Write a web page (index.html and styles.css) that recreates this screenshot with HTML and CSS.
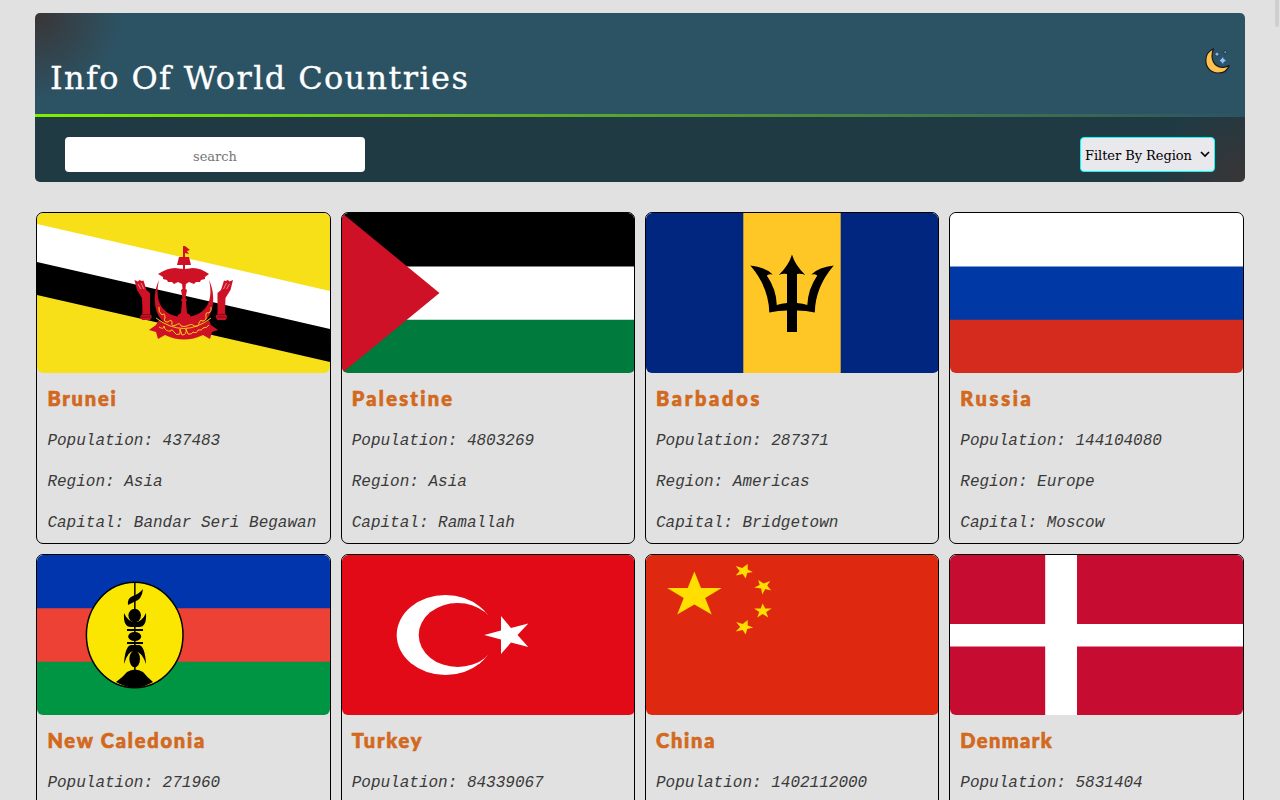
FILE: index.html
```html
<!DOCTYPE html>
<html lang="en">
<head>
<meta charset="utf-8">
<title>Info Of World Countries</title>
<link rel="stylesheet" href="styles.css">
</head>
<body>
<div class="page">
  <header class="header">
    <h1 class="title">Info Of World Countries</h1>
    <button class="theme" aria-label="Theme">
      <svg viewBox="0 0 26 26" width="26" height="26">
        <path d="M8.500 .8C3.500 3 .8 7.500 .8 12.500C.8 19.500 6 25 13 25C18.500 25 22.800 22 24.200 17.500C21.500 19.200 19.200 19.500 17 19.300C9.500 18.800 4.500 11.500 8.500 .8Z" fill="#ffc250" stroke="#16191c" stroke-width="1.200" stroke-linejoin="round"/>
        <path d="M17.700 8.800L19.200 11L21.200 12.500L19.200 14L17.700 16.200L16.200 14L14.200 12.500L16.200 11Z" fill="#8fc0ff" stroke="#36597c" stroke-width=".7"/>
        <path d="M12 3.600L13.200 5L14.500 6.100L13.200 7.200L12 8.600L10.800 7.200L9.500 6.100L10.800 5Z" fill="#7fb2f0" stroke="#1b3045" stroke-width=".8"/>
        <path d="M20.300 2.200L22.200 4.200L20.300 6.200L18.400 4.200Z" fill="#628cc0" stroke="#1b3045" stroke-width="1"/>
      </svg>
    </button>
  </header>
  <div class="toolbar">
    <input class="search" type="text" placeholder="search">
    <div class="region"><span class="region-label">Filter By Region</span>
      <svg viewBox="0 0 10 7" width="10" height="7"><path d="M1 1L5 5L9 1" fill="none" stroke="#000" stroke-width="1.700"/></svg>
    </div>
  </div>
  <main class="grid">
    <article class="card">
      <svg class="flag" viewBox="0 0 293 160" preserveAspectRatio="none">
        <path fill="#f7e017" d="M0 0H293V160H0z"/>
        <path fill="#fff" d="M0 11L293 78V117L0 50z"/>
        <path fill="#000" d="M0 49L293 116V149L0 82z"/>
        <g fill="#cf1126">
          <path d="M146 33h2l5 4-3 1 2 3-4-1v4h4l2 8h-14l2-8h4z"/>
          <path d="M121 61Q130 55 138 55L146 56V52H148V56L156 55Q164 55 172 61L168 64 168 66 164 67 163 69 159 69 157 71 152 69 149 71H145L141 69 137 71 135 69 131 69 130 67 126 66 126 64z"/>
          <path d="M145 70h4l-.5 6 1.500 1-1.500 8 1.500 2-1 2 1 11 3 2 1 3H140l1-3 3-2 1-11-1-2 1.500-2-1.500-8 1.500-1z"/>
          <path d="M122 67C113 86 117 116 147 116S181 86 172 67C178 92 165 104 147 104S116 92 122 67z"/>
          <path d="M122 107Q147 122 172 107L174 112 181 117 175 119 173 126 166 122Q147 131 128 122L121 126 119 119 112 117 119 112z"/>
          <path d="M97.500 67L100 77 105 85 105.500 100 103 104 105 107H113L115 104 113 100V80L109.500 77 106.500 67.500 105 68 102.500 67 101 68.500z"/>
          <path d="M196 67L193.500 77 188.500 85 188 100 190.500 104 188.500 107H180.500L178.500 104 180.500 100V80L184 77 187 67.500 188.500 68 191 67 192.500 68.500z"/>
        </g>
        <path d="M101 71l3 5M104 70l3 6M192.500 71l-3 5M189.500 70l-3 6" stroke="#fff" stroke-width=".5"/>
        <g fill="none" stroke="#f7e017" stroke-width=".9">
          <path d="M122 94q-1 5 3 8q3-3 3 3q-2 4 3 4q4-4 4 1q-1 4 4 2q4-3 5 1q3 1 6 0q5-3 7 0q5 1 5-3q1-4 4-2q4-1 3-5q-1-4 3-3q3-2 2-6"/>
          <path d="M122 114q5 3 5-1q1 6 7 5q0-3 3 1q2 4 6 2v-5l2 6q5 0 4-6l2 5q4 1 5-2q4 2 5-2q4 1 5-2q4 0 6-3M119 105q28 21 55 0"/>
        </g>
        <path d="M104 101.500h10M104 104h10M180 101.500h10M180 104h10" stroke="#000" stroke-width=".4"/>
      </svg>
      <h2 class="name">Brunei</h2><p>Population: 437483</p><p>Region: Asia</p><p>Capital: Bandar Seri Begawan</p>
    </article>
    <article class="card">
      <svg class="flag" viewBox="0 0 293 160" preserveAspectRatio="none">
        <path d="M0 0H293V54H0z"/><path fill="#fff" d="M0 53.500H293V107H0z"/><path fill="#007a3d" d="M0 106.700H293V160H0z"/><path fill="#ce1126" d="M0 0L97.500 80L0 160z"/>
      </svg>
      <h2 class="name wide">Palestine</h2><p>Population: 4803269</p><p>Region: Asia</p><p>Capital: Ramallah</p>
    </article>
    <article class="card">
      <svg class="flag" viewBox="0 0 293 160" preserveAspectRatio="none">
        <path fill="#00267f" d="M0 0H293V160H0z"/><path fill="#ffc726" d="M97.300 0H194.700V160H97.300z"/>
        <path d="M146 41.500Q149 52 159.300 62Q155 60 151 61V90Q157 90.500 161.300 92Q162 76 171.300 62.500Q169 60.500 165.300 61.500Q173 54 187.800 52.500Q169.300 74 168.800 99.500Q160 97.500 151 97.500V119H141V97.500Q132.500 97.500 123.300 99.500Q122.800 74 104.300 52.500Q119.300 54 126.800 61.500Q123.300 60.500 120.800 62.500Q130.300 76 130.800 92Q135.300 90.500 141 90V61Q137 60 132.800 62Q143 52 146 41.500z"/>
      </svg>
      <h2 class="name wider">Barbados</h2><p>Population: 287371</p><p>Region: Americas</p><p>Capital: Bridgetown</p>
    </article>
    <article class="card">
      <svg class="flag" viewBox="0 0 293 160" preserveAspectRatio="none">
        <path fill="#fff" d="M0 0H293V54H0z"/><path fill="#0039a6" d="M0 53.500H293V107H0z"/><path fill="#d52b1e" d="M0 106.700H293V160H0z"/>
      </svg>
      <h2 class="name wider">Russia</h2><p>Population: 144104080</p><p>Region: Europe</p><p>Capital: Moscow</p>
    </article>
    <article class="card">
      <svg class="flag" viewBox="0 0 293 160" preserveAspectRatio="none">
        <path fill="#0035ad" d="M0 0H293V54H0z"/><path fill="#ed4135" d="M0 53.300H293V107H0z"/><path fill="#009543" d="M0 106.700H293V160H0z"/>
        <ellipse cx="97.700" cy="80" rx="48.300" ry="52.700" fill="#fae600" stroke="#000" stroke-width="1.500"/>
        <path d="M97.100 27h1.500v90h-1.500z"/>
        <path d="M106 34Q105 45 97 47L91 50Q90 43 96 41Q102 39 106 34z"/>
        <ellipse cx="97.700" cy="60.500" rx="6.300" ry="6.700"/>
        <path d="M87 58Q91 67 98 67T109 58Q110 72 102 72H94Q86 72 87 58zM90 74h16v2H90zM90 87h16v2H90z"/>
        <ellipse cx="97.700" cy="81.500" rx="6.500" ry="4.500"/>
        <path d="M94 90h8Q108 91 109 109Q105 97 98 96T87 109Q88 91 94 90z"/>
        <ellipse cx="97.700" cy="104" rx="5.300" ry="8.500"/>
        <path d="M79 127Q86 122 90 117Q98 112 106 117Q110 122 116 127Q98 138 79 127z"/>
      </svg>
      <h2 class="name">New Caledonia</h2><p>Population: 271960</p><p>Region: Oceania</p><p>Capital: Nouméa</p>
    </article>
    <article class="card">
      <svg class="flag" viewBox="0 0 293 160" preserveAspectRatio="none">
        <path fill="#e30a17" d="M0 0H293V160H0z"/><ellipse cx="103.500" cy="80" rx="48.800" ry="40" fill="#fff"/><ellipse cx="115.700" cy="80" rx="39" ry="32" fill="#e30a17"/>
        <path fill="#fff" d="M142.200 80L159 75.500V61L169 73L186.300 68.500L175.500 80L186.300 92L169 87.500L159 99V84.500z"/>
      </svg>
      <h2 class="name">Turkey</h2><p>Population: 84339067</p><p>Region: Asia</p><p>Capital: Ankara</p>
    </article>
    <article class="card">
      <svg class="flag" viewBox="0 0 293 160" preserveAspectRatio="none">
        <path fill="#de2910" d="M0 0H293V160H0z"/>
        <g fill="#ffde00" transform="translate(-.3 0)"><path d="M48.700 16.500L55.300 33H76L59.500 43L66 59.500L48.700 49.500L31.500 59.500L38 43L21.500 33H42z"/>
        <path d="M102 9L102 14.500L107 17L101.500 18L100 23.500L97 19L90 20.500L94 16L90 11L96.500 13z"/>
        <path d="M124.500 26L121.500 30.500L125.500 35.500L119.500 34L116.500 39.500L115.500 33.500L108.500 32.500L114 30L112.500 25L118 28.500z"/>
        <path d="M117 48.500L119.500 53.500H126L120.500 57L122.500 62.500L117 59L111.500 62.500L113.500 57L108.500 53.500H115z"/>
        <path d="M102 65L102 70.500L107.500 72.500L101.500 74L100 79.500L97 75L90 76.500L94.500 72L90.500 67L97 69z"/></g>
      </svg>
      <h2 class="name">China</h2><p>Population: 1402112000</p><p>Region: Asia</p><p>Capital: Beijing</p>
    </article>
    <article class="card">
      <svg class="flag" viewBox="0 0 293 160" preserveAspectRatio="none">
        <path fill="#c60c30" d="M0 0H293V160H0z"/><path fill="#fff" d="M95.200 0H127V160H95.200zM0 69H293V91.500H0z"/>
      </svg>
      <h2 class="name narrow">Denmark</h2><p>Population: 5831404</p><p>Region: Europe</p><p>Capital: Copenhagen</p>
    </article>
  </main>
</div>
<div class="thumb"></div>
</body>
</html>
```
FILE: styles.css
```css
* { box-sizing: border-box; }
html, body { margin: 0; height: 100%; overflow: hidden; }
body { background: #e1e1e1; font-family: "DejaVu Serif", serif; }
.page { width: 1210px; margin: 0 auto; padding-top: 13px; }
.header {
  display: flex; justify-content: space-between; align-items: flex-start;
  height: 104px; padding: 35px 14px 0 15px;
  border-radius: 5px 5px 0 0;
  background:
    linear-gradient(90deg, #80f000, #2c5364) bottom / 100% 3px no-repeat,
    radial-gradient(circle at 0 0, #3a3536, #2c5364 88px);
}
.title {
  margin: 10px 0 0; color: #fff; white-space: nowrap;
  font: 400 32px/40px "DejaVu Serif", serif; letter-spacing: 1.370px;
  -webkit-text-stroke: .3px #fff;
}
.theme { padding: 0; border: 0; background: none; line-height: 0; }
.toolbar {
  display: flex; justify-content: space-between; align-items: flex-start;
  height: 65px; padding: 20px 30px 0; border-radius: 0 0 5px 5px;
  background: radial-gradient(circle at 100% 100%, #3a3536, #203a43 88px);
}
.search {
  width: 300px; height: 35px; padding: 3px 0 0; border: 0; border-radius: 4px;
  background: #fff; text-align: center; font: 13px "DejaVu Serif", serif;
}
.search::placeholder { color: #757575; opacity: 1; }
.region {
  display: flex; align-items: center; justify-content: space-between;
  width: 135px; height: 35px; padding: 0 4px;
  border: 1px solid aqua; border-radius: 4px; background: #e9e9ed;
  font-size: 13px; white-space: nowrap;
}
.region-label { padding-top: 2px; letter-spacing: -.06px; }
.grid {
  display: grid; grid-template-columns: repeat(4, 294.3px); grid-auto-rows: 332px;
  gap: 10px; padding: 30px 0 0 1.400px;
}
.card { overflow: hidden; border: 1px solid #000; border-radius: 7px; }
.flag { display: block; width: calc(100% + .7px); height: 160px; border-radius: 6px; }
.name {
  margin: 11px 10px 0; height: 28px; color: #d2691e; white-space: nowrap;
  font: 900 20px/28px Lato, sans-serif; letter-spacing: 1.800px;
  -webkit-text-stroke: .7px #d2691e;
}
.name.wide { letter-spacing: 2.300px; }
.name.wider { letter-spacing: 2.700px; }
.name.narrow { letter-spacing: 1.450px; }
.card p {
  margin: 0 10px; padding-top: 14px; color: #3a3a3a; white-space: nowrap;
  font: italic 16px/27px "Liberation Mono", monospace;
}
.card .name + p { padding-top: 16px; }
.thumb { position: absolute; top: 0; right: 1px; width: 4px; height: 27px; background: #cfcfcf; border-radius: 0 0 2px 2px; }
```
